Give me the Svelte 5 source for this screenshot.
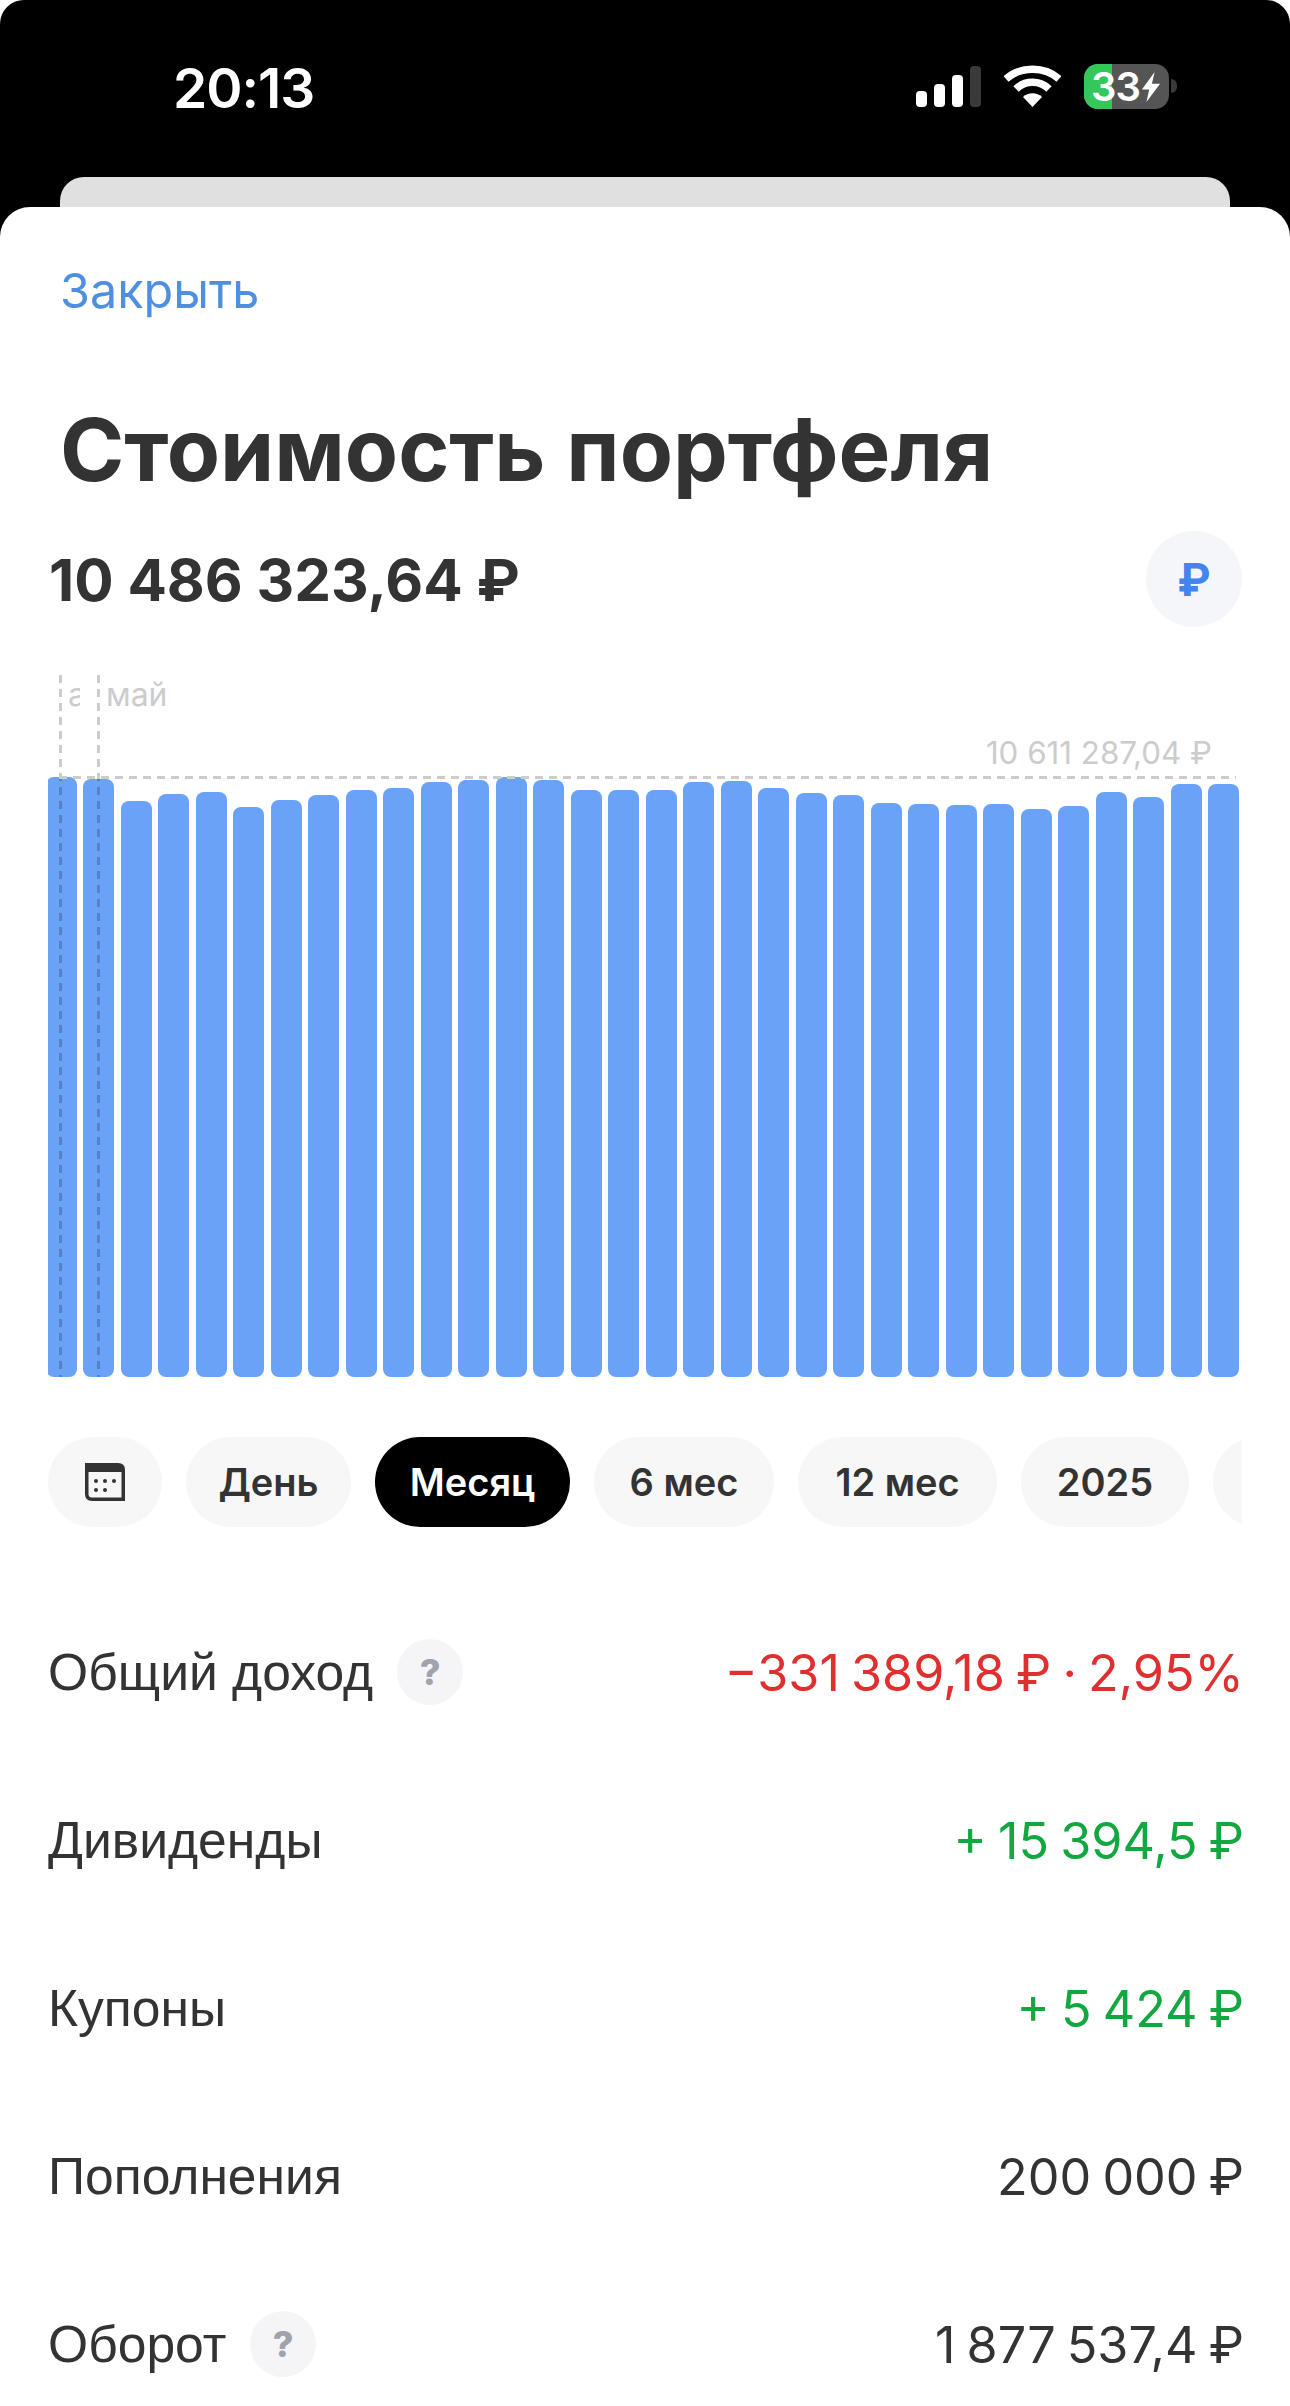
<script>
  const tops = [777, 779, 801, 794, 792, 807, 800, 795, 790, 788, 782, 780, 777, 780, 790, 790, 790, 782, 781, 788, 793, 795, 803, 804, 805, 804, 809, 806, 792, 797, 784, 784];
  const chartBottom = 1377;
  const chips = [
    { name: 'День', width: 165 },
    { name: 'Месяц', width: 195 },
    { name: '6 мес', width: 180 },
    { name: '12 мес', width: 199 },
    { name: '2025', width: 168 }
  ];
  const rows = [
    { label: 'Общий доход', value: '−331 389,18 ₽ · 2,95%', tone: 'red', hint: true },
    { label: 'Дивиденды', value: '+ 15 394,5 ₽', tone: 'green' },
    { label: 'Купоны', value: '+ 5 424 ₽', tone: 'green' },
    { label: 'Пополнения', value: '200 000 ₽', tone: '' },
    { label: 'Оборот', value: '1 877 537,4 ₽', tone: '', hint: true }
  ];
</script>

<div class="screen">
  <div class="status">
    <span class="time">20:13</span>
    <div class="status-icons">
      <svg class="signal" width="65" height="41" viewBox="0 0 65 41">
        <rect x="0" y="25" width="11" height="16" rx="4" fill="#fff" />
        <rect x="18" y="18" width="11" height="23" rx="4" fill="#fff" />
        <rect x="36" y="9" width="11" height="32" rx="4" fill="#fff" />
        <rect x="54" y="0" width="11" height="41" rx="4" fill="#3a3a3a" />
      </svg>
      <svg class="wifi" width="57" height="42" viewBox="0 0 57 42">
        <path d="M2 14 C16 1 41 1 55 14" fill="none" stroke="#fff" stroke-width="7.5" />
        <path d="M12 24 C21 15 36 15 45 24" fill="none" stroke="#fff" stroke-width="7.5" />
        <path d="M28.5 42 L19 32 C24 27 33 27 38 32 Z" fill="#fff" />
      </svg>
      <div class="battery">
        <span class="charge"></span>
        <span class="percent">33</span>
        <svg class="bolt" width="20" height="30" viewBox="0 0 22 36" preserveAspectRatio="none">
          <path d="M15 0 L1 21 H9 L6 36 L21 14 H12 Z" fill="#fff" />
        </svg>
      </div>
      <span class="nub"></span>
    </div>
  </div>
  <div class="back-card"></div>

  <div class="sheet">
    <a class="close" href="#close">Закрыть</a>
    <h1>Стоимость портфеля</h1>

    <div class="total">
      <span class="amount">10 486 323,64 ₽</span>
      <button class="currency">₽</button>
    </div>

    <div class="chart">
      {#each tops as top}
        <div class="bar" style="height: {chartBottom - top}px"></div>
      {/each}
      <span class="v-line first"></span>
      <span class="v-line second"></span>
      <span class="h-line"></span>
      <span class="month cut">а</span>
      <span class="month">май</span>
      <span class="max">10 611 287,04 ₽</span>
    </div>

    <div class="chips">
      <button class="chip icon" aria-label="Календарь">
        <svg width="40" height="38" viewBox="0 0 40 38">
          <path d="M0 0 H33 Q40 0 40 7 V38 H7 Q0 38 0 31 Z" fill="#333" />
          <path d="M3.500 9 H36.500 V34.500 H7 Q3.500 34.500 3.500 31 Z" fill="#f7f7f7" />
          <circle cx="11" cy="18" r="2" fill="#333" />
          <circle cx="20" cy="18" r="2" fill="#333" />
          <circle cx="29" cy="18" r="2" fill="#333" />
          <circle cx="11" cy="27" r="2" fill="#333" />
          <circle cx="20" cy="27" r="2" fill="#333" />
        </svg>
      </button>
      {#each chips as chip}
        <button class="chip" class:active={chip.name === 'Месяц'} style="width: {chip.width}px">{chip.name}</button>
      {/each}
      <button class="chip stub" aria-label="Ещё"></button>
    </div>

    <div class="rows">
      {#each rows as row}
        <div class="row">
          <span class="label">{row.label}</span>
          {#if row.hint}
            <span class="hint">?</span>
          {/if}
          <span class="value {row.tone}">{row.value}</span>
        </div>
      {/each}
    </div>
  </div>
</div>

<style>
  :global(body) {
    background: #fff;
  }

  .screen {
    width: 1290px;
    height: 2406px;
    overflow: hidden;
    background: #000;
    border-radius: 24px 24px 0 0;
    font-family: Inter, "Liberation Sans", sans-serif;
    color: #333;
  }

  .status {
    height: 177px;
    display: flex;
    justify-content: space-between;
    padding: 60px 113px 0 173px;
    box-sizing: border-box;
  }

  .time {
    color: #fff;
    font-size: 55px;
    font-weight: 600;
    line-height: 56px;
    letter-spacing: -1px;
  }

  .status-icons {
    display: flex;
    align-items: flex-start;
    padding-top: 4px;
  }

  .signal {
    margin: 2px 23px 0 0;
  }

  .wifi {
    margin: 1px 23px 0 0;
  }

  .battery {
    width: 85px;
    height: 45px;
    box-sizing: border-box;
    padding-left: 7px;
    border-radius: 14px;
    background: #555;
    position: relative;
    display: flex;
    align-items: center;
    gap: 1px;
  }

  .charge {
    position: absolute;
    left: 0;
    top: 0;
    bottom: 0;
    width: 28px;
    background: #34c759;
    border-radius: 14px 0 0 14px;
  }

  .percent {
    position: relative;
    color: #fff;
    font-size: 40px;
    font-weight: 600;
    line-height: 45px;
    letter-spacing: -1px;
  }

  .bolt {
    position: relative;
  }

  .nub {
    width: 6px;
    height: 14px;
    margin: 15px 0 0 2px;
    background: #3a3a3a;
    border-radius: 0 6px 6px 0;
  }

  .back-card {
    height: 30px;
    margin: 0 60px;
    background: #e0e0e0;
    border-radius: 24px 24px 0 0;
  }

  .sheet {
    background: #fff;
    border-radius: 30px 30px 0 0;
    padding: 58px 48px 0 49px;
    height: 2199px;
    box-sizing: border-box;
  }

  .close {
    display: block;
    margin-left: 11px;
    font-size: 48.5px;
    line-height: 52px;
    color: #4f8fe0;
    text-decoration: none;
  }

  h1 {
    margin: 83px 0 0 11px;
    font-size: 87px;
    font-weight: 700;
    line-height: 100px;
    color: #333;
  }

  .total {
    display: flex;
    justify-content: space-between;
    align-items: center;
    margin-top: 31px;
  }

  .amount {
    font-size: 58.4px;
    font-weight: 700;
  }

  .currency {
    width: 96px;
    height: 96px;
    border: none;
    border-radius: 50%;
    background: #f5f6fa;
    color: #4285f0;
    font-family: inherit;
    font-size: 45px;
    font-weight: 700;
    padding: 0;
  }

  .chart {
    position: relative;
    height: 702px;
    margin: 48px 0 0 -1px;
    display: flex;
    align-items: flex-end;
    gap: 6.5px;
    overflow: hidden;
  }

  .bar {
    flex: 0 0 31px;
    background: #6aa2f8;
    border-radius: 8px;
  }

  .bar:first-child {
    margin-left: -2.5px;
  }

  .v-line {
    position: absolute;
    top: 0;
    bottom: 0;
    width: 3px;
    background: repeating-linear-gradient(to bottom, rgba(0, 0, 0, 0.2) 0 8px, transparent 8px 14px);
  }

  .v-line.first {
    left: 11px;
  }

  .v-line.second {
    left: 49px;
  }

  .h-line {
    position: absolute;
    left: 11px;
    top: 101px;
    width: 1177px;
    height: 3px;
    background: repeating-linear-gradient(to right, #ccc 0 8px, transparent 8px 14px);
  }

  .month {
    position: absolute;
    left: 58px;
    top: 0;
    font-size: 32px;
    line-height: 40px;
    color: #ccc;
  }

  .month.cut {
    left: 20px;
    width: 12px;
    overflow: hidden;
  }

  .max {
    position: absolute;
    right: 30px;
    top: 60px;
    font-size: 31.3px;
    line-height: 36px;
    color: #ccc;
    white-space: nowrap;
  }

  .chips {
    display: flex;
    gap: 24px;
    margin: 60px 0 0 -1px;
    overflow: hidden;
  }

  .chip {
    flex: none;
    height: 90px;
    padding: 0;
    border: none;
    border-radius: 45px;
    background: #f7f7f7;
    color: #333;
    font-family: inherit;
    font-size: 38px;
    font-weight: 600;
  }

  .chip.active {
    background: #000;
    color: #fff;
  }

  .chip.icon {
    width: 114px;
    display: flex;
    align-items: center;
    justify-content: center;
  }

  .chip.stub {
    width: 114px;
  }

  .rows {
    margin: 61px -2px 0 -1px;
  }

  .row {
    height: 168px;
    display: flex;
    align-items: center;
  }

  .label {
    font-family: "Liberation Sans", sans-serif;
    font-size: 51.6px;
  }

  .hint {
    width: 66px;
    height: 66px;
    margin-left: 24px;
    border-radius: 50%;
    background: #f5f5f7;
    color: #a0a3ad;
    font-size: 36px;
    font-weight: 800;
    display: flex;
    align-items: center;
    justify-content: center;
  }

  .value {
    margin-left: auto;
    font-size: 50.3px;
    word-spacing: -3px;
    white-space: nowrap;
  }

  .value.red {
    color: #e02f2f;
  }

  .value.green {
    color: #12a83f;
  }
</style>
